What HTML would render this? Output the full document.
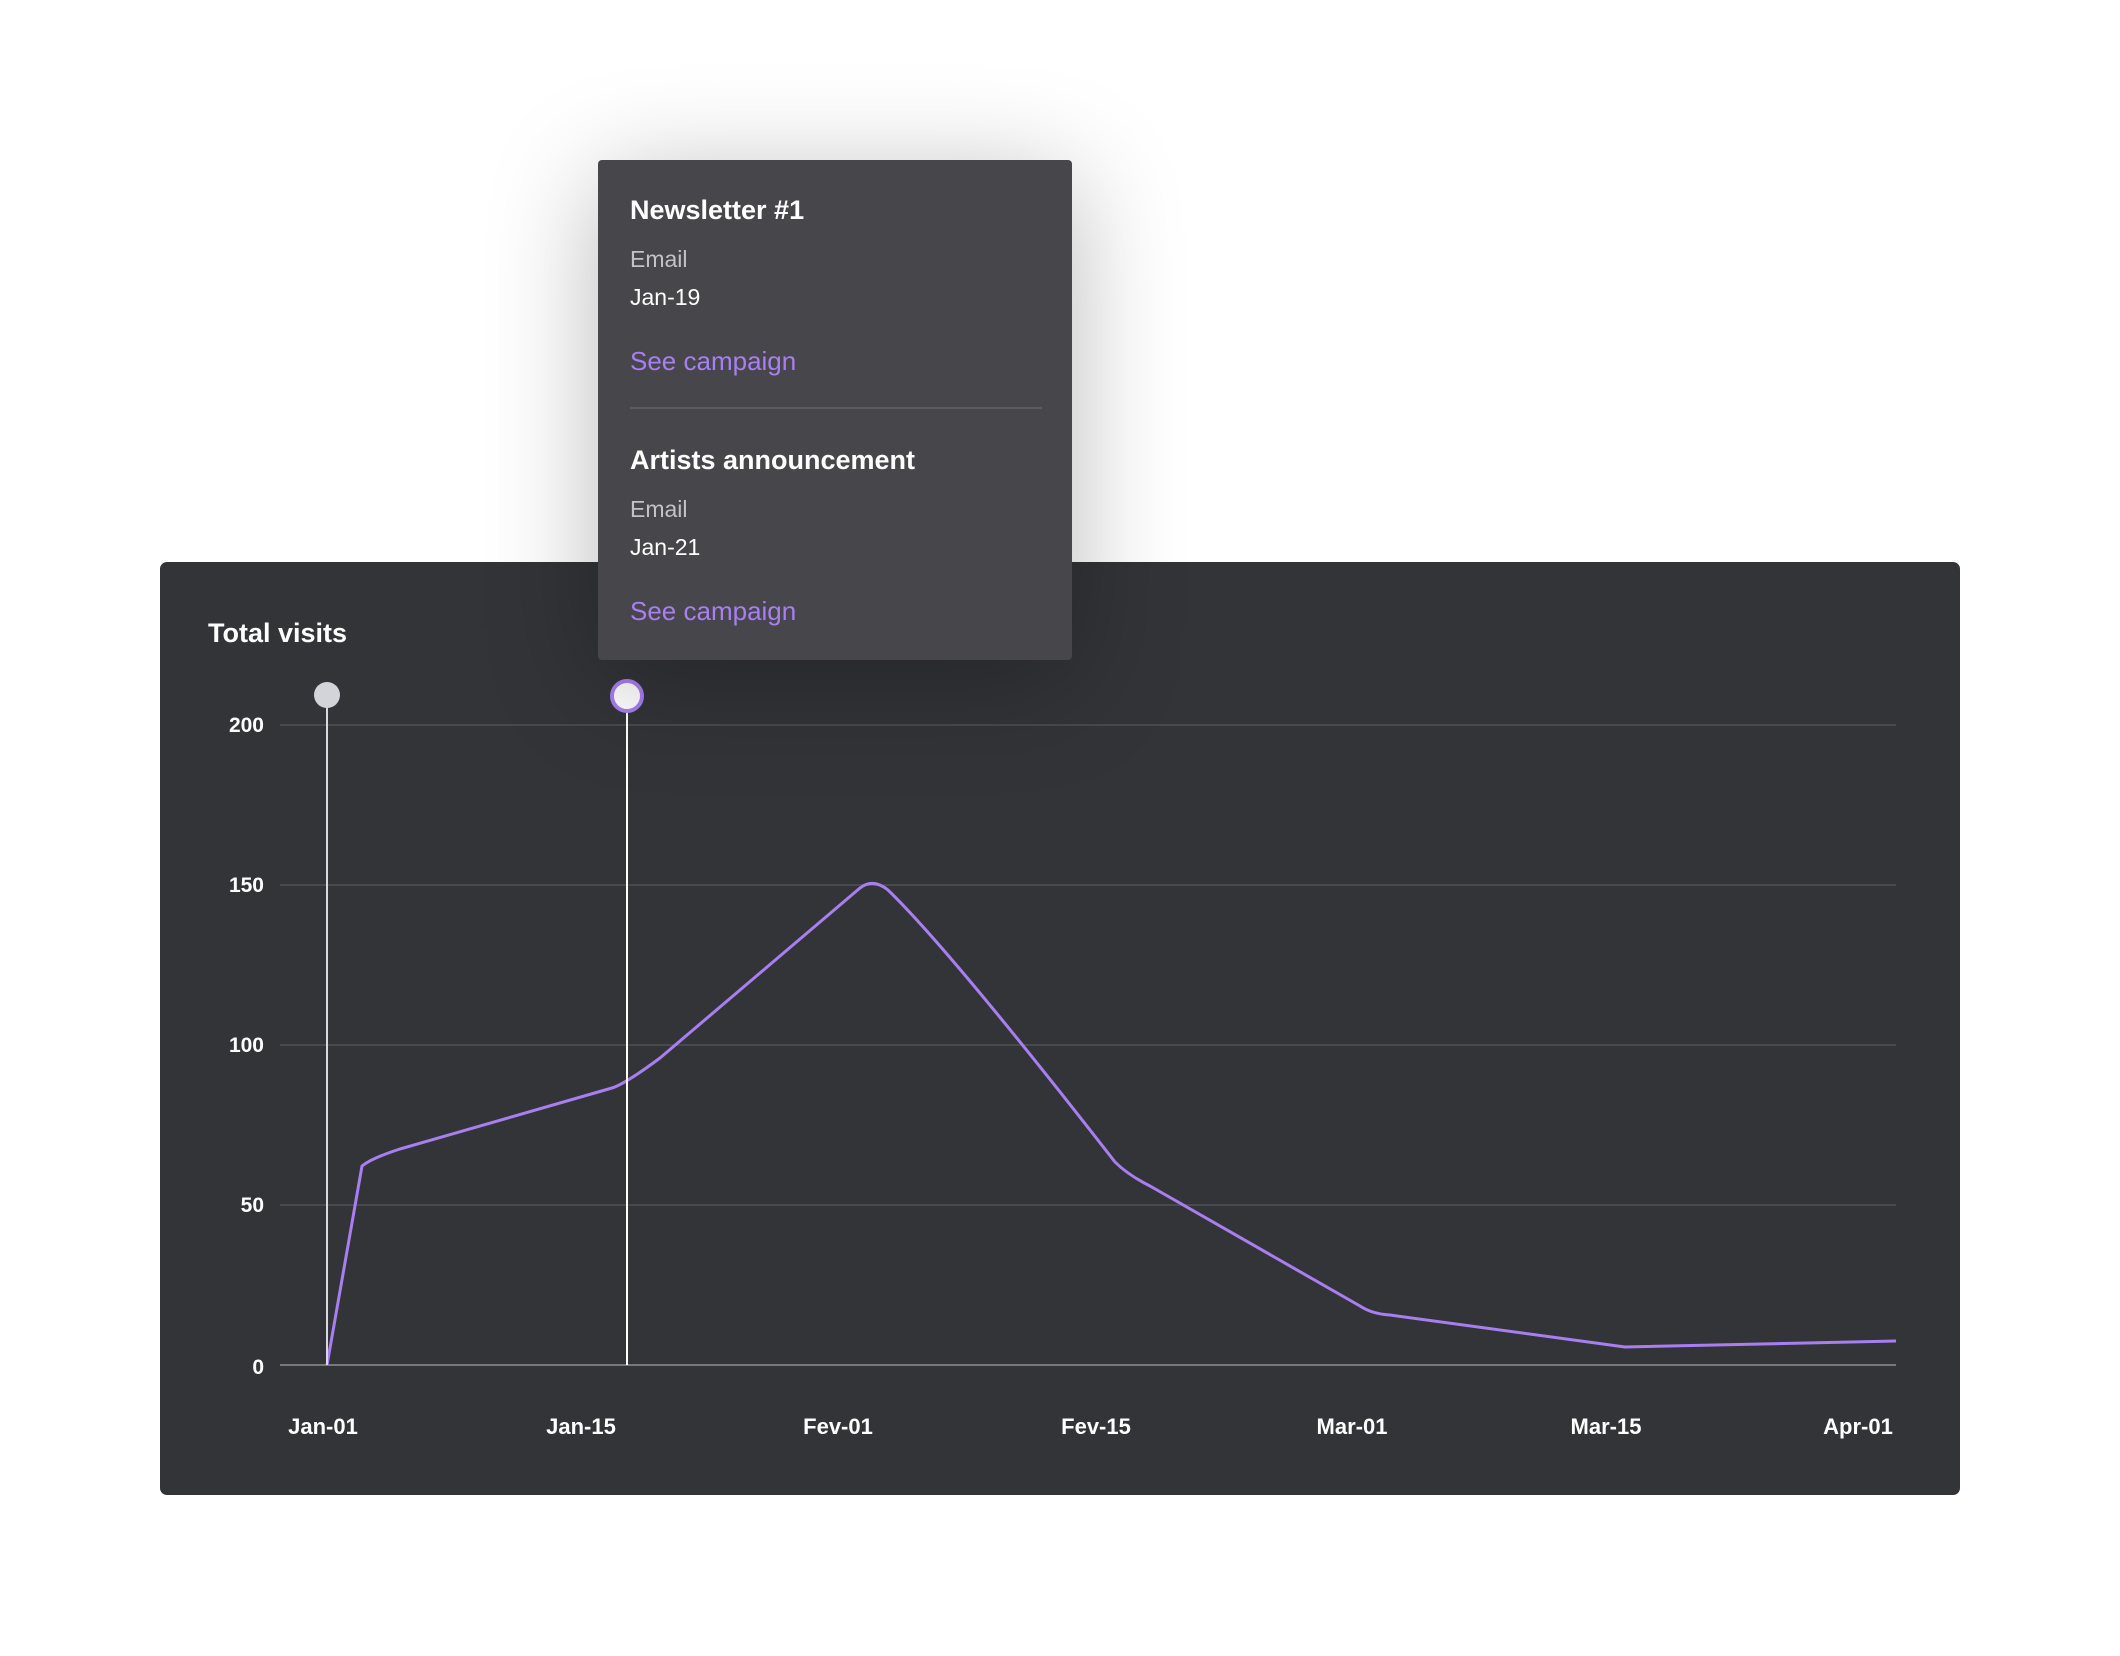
<!DOCTYPE html>
<html><head><meta charset="utf-8"><style>
html,body{margin:0;padding:0;background:#fff;}
body{width:2120px;height:1656px;position:relative;overflow:hidden;font-family:"Liberation Sans",sans-serif;}
.card{position:absolute;left:160px;top:562px;width:1800px;height:933px;background:#333438;border-radius:7px;}
.tip{position:absolute;left:598px;top:160px;width:474px;height:500px;background:#47474b;border-radius:4px;box-shadow:0 20px 110px rgba(0,0,0,0.28);color:#fff;}
.t{position:absolute;left:32px;white-space:nowrap;}
.h{font-size:27px;font-weight:bold;}
.s{font-size:23px;color:#c3c3c6;}
.d{font-size:23px;color:#fff;}
.l{font-size:26px;color:#a87ff0;}
</style></head><body>
<div class="card"></div>
<svg style="position:absolute;left:0;top:0" width="2120" height="1656">
<text x="208" y="642" fill="#fff" font-size="27" font-weight="bold" font-family="Liberation Sans">Total visits</text>
<g stroke="#48494d" stroke-width="2">
<line x1="280" y1="725" x2="1896" y2="725"/>
<line x1="280" y1="885" x2="1896" y2="885"/>
<line x1="280" y1="1045" x2="1896" y2="1045"/>
<line x1="280" y1="1205" x2="1896" y2="1205"/>
</g>
<line x1="280" y1="1365" x2="1896" y2="1365" stroke="#77787c" stroke-width="2"/>
<g fill="#fff" font-size="21" font-weight="bold" font-family="Liberation Sans" text-anchor="end">
<text x="264" y="732">200</text><text x="264" y="892">150</text><text x="264" y="1052">100</text><text x="264" y="1212">50</text><text x="264" y="1374">0</text>
</g>
<g fill="#fff" font-size="22" font-weight="bold" font-family="Liberation Sans" text-anchor="middle">
<text x="323" y="1434">Jan-01</text><text x="581" y="1434">Jan-15</text><text x="838" y="1434">Fev-01</text><text x="1096" y="1434">Fev-15</text><text x="1352" y="1434">Mar-01</text><text x="1606" y="1434">Mar-15</text><text x="1858" y="1434">Apr-01</text>
</g>
<path d="M327 1365 L362 1166 Q372 1158 400 1149 L612 1088 Q625 1084 660 1058 L860 888 Q873 878 888 890 Q950 950 1115 1162 Q1128 1175 1150 1186 L1360 1306 Q1372 1314 1390 1315 L1625 1347 L1896 1341" fill="none" stroke="#a87ff0" stroke-width="3" stroke-linejoin="round"/>
<line x1="327" y1="700" x2="327" y2="1365" stroke="#d8d9de" stroke-width="2"/>
<line x1="627" y1="700" x2="627" y2="1365" stroke="#fff" stroke-width="2"/>
<circle cx="327" cy="695" r="13" fill="#d3d4da"/>
<circle cx="627" cy="696" r="15" fill="#fff" stroke="#a87ff0" stroke-width="4"/>
</svg>
<div class="tip">
<div class="t h" style="top:35px">Newsletter #1</div>
<div class="t s" style="top:86px">Email</div>
<div class="t d" style="top:124px">Jan-19</div>
<div class="t l" style="top:186px">See campaign</div>
<div style="position:absolute;left:32px;top:247px;width:412px;height:2px;background:#5a5a5f"></div>
<div class="t h" style="top:285px">Artists announcement</div>
<div class="t s" style="top:336px">Email</div>
<div class="t d" style="top:374px">Jan-21</div>
<div class="t l" style="top:436px">See campaign</div>
</div>
</body></html>
